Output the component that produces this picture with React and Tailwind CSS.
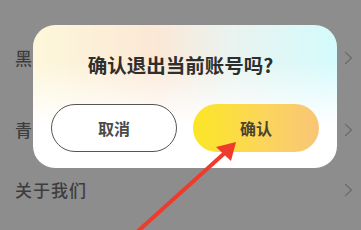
import React from "react";

const rows = [
  { label: "黑色模式", h: "h-[72px]" },
  { label: "青少年模式", h: "h-[72px]" },
  { label: "关于我们", h: "h-[48px]" },
];

function Chevron() {
  return (
    <svg width="9" height="14" viewBox="0 0 9 14" fill="none">
      <path d="M1.5 1.5 L7.5 7 L1.5 12.5" stroke="#6c6c6c" strokeWidth="1.3" strokeLinecap="round" strokeLinejoin="round" />
    </svg>
  );
}

export default function App() {
  return (
    <div
      className="relative w-[361px] h-[230px] overflow-hidden bg-[#8d8d8d]"
      style={{ fontFamily: '"Noto Sans CJK SC", "Noto Sans", sans-serif' }}
    >
      {/* page behind the dialog */}
      <div className="flex flex-col pt-[22px]">
        {rows.map((r) => (
          <div key={r.label} className={`flex items-center justify-between pl-[15px] pr-[8px] ${r.h}`}>
            <span className="text-[17px] leading-[24px] font-medium tracking-[1px] text-[#3d3d3d]">{r.label}</span>
            <Chevron />
          </div>
        ))}
      </div>

      {/* dialog */}
      <div className="absolute left-[33px] top-[25px] w-[304px] h-[143px] rounded-[22px] overflow-hidden bg-[linear-gradient(180deg,rgba(255,255,255,0)_25%,#ffffff_70%),linear-gradient(90deg,#fdf7da_0%,#fbe8d6_40%,#eaf3ef_65%,#d4fbfd_100%)] flex flex-col items-center">
        <div className="mt-[27px] mr-[9px] text-[19.5px] leading-[26px] font-bold text-[#2e2e2e]">确认退出当前账号吗?</div>
        <div className="mt-[26px] flex gap-[16px]">
          <button className="w-[126px] h-[48px] rounded-full border border-[#555] bg-white text-[16px] font-bold text-[#4a4a4a]">
            取消
          </button>
          <button className="w-[126px] h-[48px] rounded-full bg-[linear-gradient(90deg,#fbe625,#fbd65a_55%,#f9c577)] text-[16px] font-bold text-[#4a4530]">
            确认
          </button>
        </div>
      </div>

      {/* red annotation arrow */}
      <svg className="absolute left-0 top-0" width="361" height="230" viewBox="0 0 361 230">
        <line x1="137" y1="232" x2="228" y2="150" stroke="#ef3b2c" strokeWidth="4" />
        <polygon points="236,142 216,147 231,161" fill="#ef3b2c" />
      </svg>
    </div>
  );
}
